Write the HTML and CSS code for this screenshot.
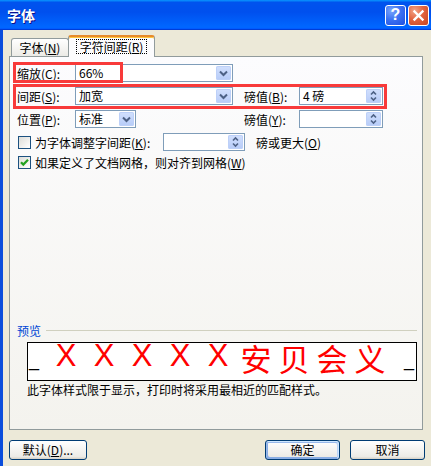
FILE: index.html
```html
<!DOCTYPE html>
<html lang="zh-CN">
<head>
<meta charset="utf-8">
<title>字体</title>
<link rel="stylesheet" href="styles.css">
</head>
<body>
<div class="window">
  <div class="titlebar">
    <span class="title">字体</span>
    <div class="controls">
      <span class="tbtn help">?</span>
      <span class="tbtn close"><svg width="13" height="13" viewBox="0 0 13 13"><path d="M2.5 2.5L10.5 10.5M10.5 2.5L2.5 10.5" stroke="#fff" stroke-width="2.4" stroke-linecap="square"/></svg></span>
    </div>
  </div>
  <div class="client">
    <div class="tabs">
      <div class="tab t1">字体(<u>N</u>)</div>
      <div class="tab active"><span class="focus">字符间距(<u>R</u>)</span></div>
    </div>
    <div class="panel">
      <div class="row">
        <span class="lbl">缩放(<u>C</u>):</span>
        <div class="combo wide"><span class="val">66%</span><span class="dd"><svg width="15" height="14" viewBox="0 0 15 14"><path d="M4 5.5L7.5 9L11 5.5" fill="none" stroke="#4D6185" stroke-width="2"/></svg></span></div>
      </div>
      <div class="row">
        <span class="lbl">间距(<u>S</u>):</span>
        <div class="combo wide"><span class="val">加宽</span><span class="dd"><svg width="15" height="14" viewBox="0 0 15 14"><path d="M4 5.5L7.5 9L11 5.5" fill="none" stroke="#4D6185" stroke-width="2"/></svg></span></div>
        <span class="lbl2">磅值(<u>B</u>):</span>
        <div class="combo spin"><span class="val">4 磅</span><span class="dd"><svg width="15" height="14" viewBox="0 0 15 14"><path d="M5 5.5L7.5 3L10 5.5M5 8.5L7.5 11L10 8.5" fill="none" stroke="#4D6185" stroke-width="1.6"/></svg></span></div>
      </div>
      <div class="row">
        <span class="lbl">位置(<u>P</u>):</span>
        <div class="col">
          <div class="combo narrow"><span class="val">标准</span><span class="dd"><svg width="15" height="14" viewBox="0 0 15 14"><path d="M4 5.5L7.5 9L11 5.5" fill="none" stroke="#4D6185" stroke-width="2"/></svg></span></div>
        </div>
        <span class="lbl2">磅值(<u>Y</u>):</span>
        <div class="combo spin"><span class="val"></span><span class="dd"><svg width="15" height="14" viewBox="0 0 15 14"><path d="M5 5.5L7.5 3L10 5.5M5 8.5L7.5 11L10 8.5" fill="none" stroke="#4D6185" stroke-width="1.6"/></svg></span></div>
      </div>
      <div class="row">
        <span class="cb"></span>
        <span class="cbl kern">为字体调整字间距(<u>K</u>):</span>
        <div class="combo spin small"><span class="val"></span><span class="dd"><svg width="15" height="14" viewBox="0 0 15 14"><path d="M5 5.5L7.5 3L10 5.5M5 8.5L7.5 11L10 8.5" fill="none" stroke="#4D6185" stroke-width="1.6"/></svg></span></div>
        <span class="after">磅或更大(<u>O</u>)</span>
      </div>
      <div class="row r5">
        <span class="cb"><svg width="11" height="11" viewBox="0 0 11 11"><path d="M2 5.2L4.3 7.6L9 2.8" fill="none" stroke="#21A121" stroke-width="2.2"/></svg></span>
        <span class="cbl">如果定义了文档网格，则对齐到网格(<u>W</u>)</span>
      </div>
      <div class="preview">
        <div class="legend"><span>预览</span><span class="rule"></span></div>
        <div class="pbox">
          <span class="us">_</span>
          <span class="g x">X</span>
          <span class="g x">X</span>
          <span class="g x">X</span>
          <span class="g x">X</span>
          <span class="g x">X</span>
          <span class="g h">安</span>
          <span class="g h">贝</span>
          <span class="g h">会</span>
          <span class="g h">义</span>
          <span class="us us-r">_</span>
        </div>
        <p class="note">此字体样式限于显示，打印时将采用最相近的匹配样式。</p>
      </div>
    </div>
    <div class="actions">
      <button class="btn def">默认(<u>D</u>)...</button>
      <button class="btn ok">确定</button>
      <button class="btn cancel">取消</button>
    </div>
  </div>
  <div class="mark mark1"></div>
  <div class="mark mark2"></div>
</div>
</body>
</html>
```

FILE: styles.css
```css
html, body {
  margin: 0;
  padding: 0;
}
body {
  width: 431px;
  height: 466px;
  overflow: hidden;
  background: #ECE9D8;
  font-family: "Noto Sans CJK SC", "Noto Sans", sans-serif;
  font-size: 12px;
  color: #000;
}
u {
  text-decoration: underline;
  text-underline-offset: 1px;
}
.window {
  position: relative;
  width: 431px;
  height: 466px;
  display: flex;
  flex-direction: column;
}
.titlebar {
  height: 30px;
  flex: none;
  box-sizing: border-box;
  display: flex;
  align-items: center;
  padding: 0 2px 0 7px;
  background: linear-gradient(180deg, #0997ff, #0053ee 8%, #0050ee 40%, #06f 88%, #06f 93%, #005bff 95%, #003dd7 96%, #003dd7);
}
.title {
  color: #fff;
  font-weight: bold;
  font-size: 14px;
  line-height: 16px;
  text-shadow: 1px 1px #0f1089;
}
.controls {
  margin-left: auto;
  display: flex;
  gap: 2px;
}
.tbtn {
  width: 21px;
  height: 21px;
  box-sizing: border-box;
  border: 1px solid #fff;
  border-radius: 3px;
  display: flex;
  align-items: center;
  justify-content: center;
}
.help {
  background: radial-gradient(circle at 30% 25%, #7aa5fb 0%, #3c72f3 45%, #1f4fe0 100%);
  color: #fff;
  font-family: "Liberation Sans", sans-serif;
  font-weight: bold;
  font-size: 16px;
  line-height: 16px;
}
.close {
  background: radial-gradient(circle at 30% 25%, #f3a488 0%, #e2643f 45%, #c84420 100%);
}
.client {
  flex: 1;
  border-left: 3px solid #0a4ddc;
  padding: 5px 0 0 6px;
  background: #ECE9D8;
}
.tabs {
  display: flex;
  align-items: flex-end;
  height: 21px;
  padding-left: 2px;
}
.tab {
  box-sizing: border-box;
  height: 18px;
  border: 1px solid #919B9C;
  border-bottom: none;
  border-radius: 3px 3px 0 0;
  background: linear-gradient(180deg, #fff, #ecebe6);
  display: flex;
  align-items: center;
  justify-content: center;
  white-space: nowrap;
  line-height: 14px;
}
.t1 {
  width: 58px;
}
.tab.active {
  position: relative;
  z-index: 1;
  width: 87px;
  height: 22px;
  margin-left: -1px;
  margin-bottom: -1px;
  border-top: 2px solid #e68b2c;
  box-shadow: inset 0 1px #ffc73c;
  background: #fcfcfe;
  padding-bottom: 1px;
}
.focus {
  border: 1px dotted #000;
  padding: 0 3px;
  line-height: 13px;
}
.panel {
  width: 414px;
  height: 374px;
  box-sizing: border-box;
  border: 1px solid #919B9C;
  background: linear-gradient(180deg, #fcfcfe, #f4f3ee);
  padding: 7px 5px 32px 7px;
  display: flex;
  flex-direction: column;
}
.row {
  display: flex;
  align-items: center;
  height: 18px;
  margin-bottom: 5px;
  white-space: nowrap;
}
.row.r5 {
  height: 16px;
  margin-top: -2px;
}
.lbl {
  width: 58px;
  flex: none;
}
.lbl2 {
  width: 55px;
  flex: none;
  margin-left: 11px;
}
.col {
  width: 158px;
  flex: none;
}
.combo {
  box-sizing: border-box;
  height: 18px;
  border: 1px solid #7F9DB9;
  background: #fff;
  padding: 1px;
  display: flex;
  flex: none;
}
.combo.wide {
  width: 158px;
}
.combo.narrow {
  width: 61px;
}
.combo.spin {
  width: 84px;
}
.combo.spin.small {
  width: 82px;
}
.val {
  flex: 1;
  padding-left: 2px;
  line-height: 14px;
}
.dd {
  width: 15px;
  height: 14px;
  border-radius: 2px;
  background: linear-gradient(180deg, #d2e0fd, #b6cbf8);
  box-shadow: inset 0 0 0 1px #bdd0f8;
  display: flex;
}
.cb {
  width: 13px;
  height: 13px;
  box-sizing: border-box;
  border: 1px solid #1C5180;
  background: linear-gradient(135deg, #dcdcd7, #fff);
  margin-left: 1px;
  display: flex;
  align-items: center;
  justify-content: center;
  flex: none;
}
.cbl {
  margin-left: 4px;
}
.cbl.kern {
  width: 128px;
  flex: none;
}
.after {
  margin-left: 11px;
}
.preview {
  margin-top: auto;
}
.legend {
  display: flex;
  align-items: center;
  height: 14px;
  color: #0046D5;
}
.rule {
  flex: 1;
  height: 1px;
  margin-left: 5px;
  background: #d0d0bf;
}
.pbox {
  box-sizing: border-box;
  height: 39px;
  margin: 5px 0 0 10px;
  border: 1px solid #000;
  background: #fff;
  display: flex;
  align-items: flex-end;
}
.us {
  font-family: "Liberation Sans", sans-serif;
  font-size: 18px;
  line-height: 18px;
  width: 10px;
  margin-left: 1px;
  margin-right: 8px;
  padding-bottom: 11px;
}
.us-r {
  margin-left: auto;
  margin-right: 2px;
}
.g {
  width: 38px;
  text-align: center;
  color: #ff0000;
  font-size: 31px;
  line-height: 35px;
}
.g.x {
  font-family: "Liberation Sans", sans-serif;
  padding-bottom: 7px;
}
.g.h {
  font-family: "Noto Sans CJK SC", sans-serif;
  padding-bottom: 5px;
}
.note {
  margin: 2px 0 0 10px;
  line-height: 14px;
}
.actions {
  display: flex;
  width: 416px;
  margin-top: 10px;
}
.btn {
  box-sizing: border-box;
  height: 20px;
  padding: 0;
  border: 1px solid #003c74;
  border-radius: 3px;
  background: linear-gradient(180deg, #fff, #ecebe6 86%, #d6d0c5);
  font-family: "Noto Sans CJK SC", sans-serif;
  font-size: 12px;
  color: #000;
  line-height: 14px;
}
.btn.def {
  width: 78px;
}
.btn.ok {
  width: 75px;
  margin-left: auto;
  box-shadow: inset -1px 1px #cee7ff, inset 1px 2px #98b8ea, inset -2px 2px #bcd4f6, inset 1px -1px #89ade4, inset 2px -2px #89ade4;
}
.btn.cancel {
  width: 75px;
  margin-left: 10px;
}
.mark {
  position: absolute;
  box-sizing: border-box;
  border: 3px solid #f83a3a;
  pointer-events: none;
}
.mark1 {
  left: 13px;
  top: 62px;
  width: 110px;
  height: 21px;
}
.mark2 {
  left: 13px;
  top: 84px;
  width: 374px;
  height: 25px;
}
```
